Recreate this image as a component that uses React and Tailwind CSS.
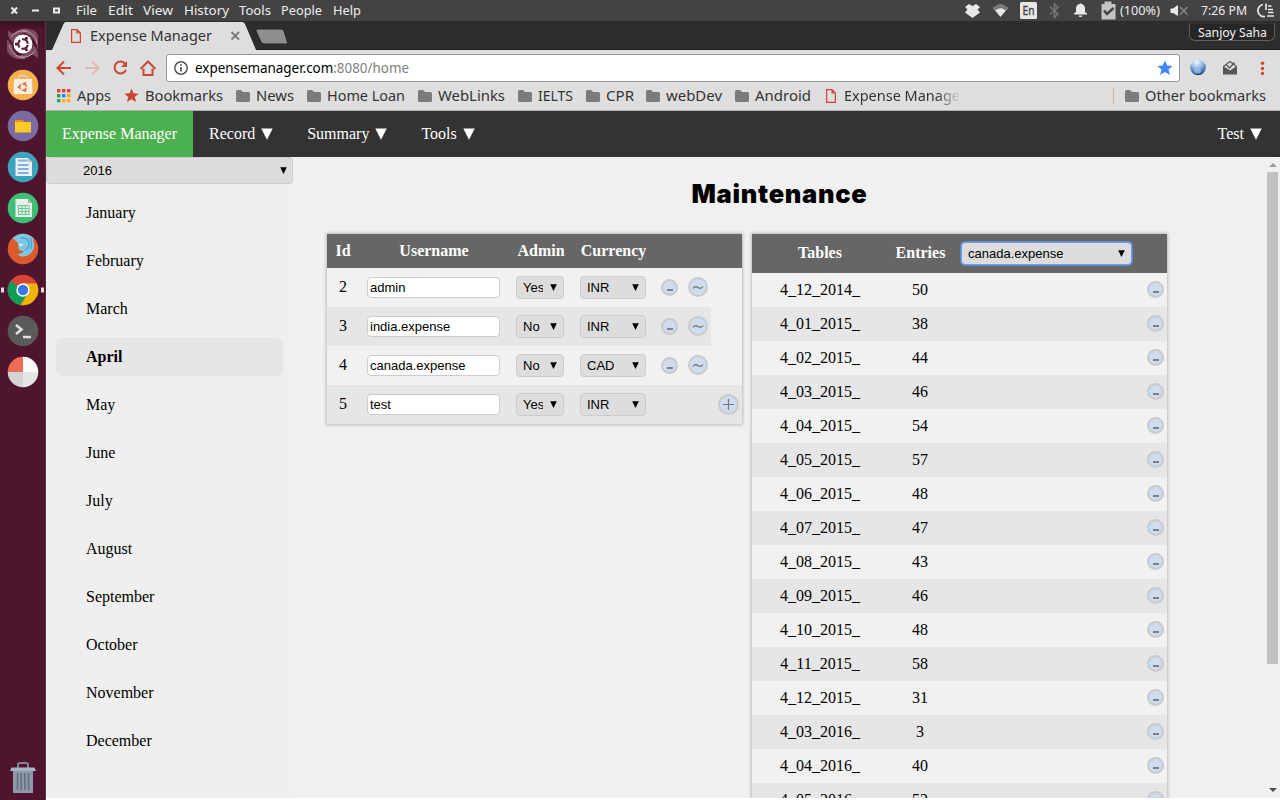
import React from "react";

const UI = "font-['Noto_Sans',sans-serif]";

function Label({ w, className = "", children }) {
  return (
    <svg width={w} height="20" className={`shrink-0 overflow-visible ${className}`}>
      <text x="0" y="15" textLength={w} lengthAdjust="spacingAndGlyphs">{children}</text>
    </svg>
  );
}

const Folder = () => (
  <svg width="14" height="12" viewBox="0 0 14 12" className="shrink-0"><path d="M0 1.5Q0 0 1.5 0H5L7 2H12.5Q14 2 14 3.5V10.5Q14 12 12.5 12H1.5Q0 12 0 10.5Z" fill="#7b7b7b" /></svg>
);
const Page = () => (
  <svg width="10" height="14" viewBox="0 0 10 14" className="shrink-0"><path d="M.6.6H6L9.4 4V13.4H.6ZM6 .6V4H9.4" fill="none" stroke="#cf4030" strokeWidth="1.2" /></svg>
);
const Star = ({ c, s }) => (
  <svg width={s} height={s} viewBox="0 0 16 16" className="shrink-0"><path d="M8 .5 10.2 5.6 15.6 6 11.5 9.5 12.9 15 8 12 3.1 15 4.500 9.5.4 6 5.800 5.6Z" fill={c} /></svg>
);
const Apps = () => (
  <svg width="14" height="14" className="shrink-0">
    {["#f03a3a", "#f03a3a", "#f03a3a", "#2ca05a", "#1e88f0", "#f5ac17", "#2ca05a", "#f5ac17", "#f5ac17"].map((c, i) => (
      <rect key={i} x={(i % 3) * 5} y={Math.floor(i / 3) * 5} width="3.4" height="3.4" fill={c} />
    ))}
  </svg>
);

const menus = [["File", 21, 11], ["Edit", 25, 10], ["View", 30, 11], ["History", 45, 10], ["Tools", 32, 10], ["People", 41, 11], ["Help", 28, 0]];

function TopBar() {
  return (
    <div className={`flex h-[21px] shrink-0 items-center justify-between bg-[#434343] text-[13px] text-[#eeeeee] ${UI}`}>
      <div className="flex items-center">
        <svg width="76" height="21" fill="none" stroke="#eee" strokeWidth="2"><path d="M11.500 7.500 17 13.500M17 7.500 11.500 13.500M32 10.500H39" /><rect x="54" y="8.500" width="5" height="4" /></svg>
        {menus.map(([t, w, g]) => (
          <span key={t} className="flex"><Label w={w} className="-mt-px fill-[#eeeeee]">{t}</Label><i style={{ width: g }} /></span>
        ))}
      </div>
      <div className="flex items-center">
        <svg width="156" height="21" className="shrink-0" fill="#e8e8e8">
          <path d="M5 4 8.500 6 12 4 16 7 13.500 9.500 16 12.500 8.500 18 1 12.500 3.500 9.500 1 7Z" />
          <path d="M29 8Q36.500 2 44 8L36.500 17Z" />
          <path d="M29 8Q36.500 0 44 8L41.500 10.500Q36.500 6 31.500 10.500Z" fill="#777" />
          <rect x="56" y="2" width="17" height="17" rx="1.500" />
          <text x="58.500" y="15" fontSize="12" fill="#444" stroke="#444" strokeWidth=".3" textLength="12" lengthAdjust="spacingAndGlyphs">En</text>
          <path d="M86 6.500 94 14 90.500 17.500V4L94 7.500 86 14.500" fill="none" stroke="#777" strokeWidth="1.500" />
          <path d="M110 14.500V13.500L112 12V8Q112.500 4.500 115.500 4L116.500 3 117.500 4Q120.500 4.500 121 8V12L123 13.500V14.500ZM114.500 15.500H118.500Q118.500 17 116.500 17T114.500 15.500Z" />
          <path d="M137.500 4H140.500V1.500H147.500V4H151.500V19.500H137.500Z" fill="#c4c4c4" />
          <path d="M140 10.500 143 14 149.500 8" fill="none" stroke="#444" strokeWidth="2.500" />
        </svg>
        <Label w={40} className="-mt-px mr-px fill-[#eeeeee]">(100%)</Label>
        <svg width="40" height="21"><path d="M9.500 8.500H12L17 5V16L12 13H9.500Z" fill="#e8e8e8" /><path d="M19 7 26.500 14.500M26.500 7 19 14.500" stroke="#888" strokeWidth="1.500" /></svg>
        <Label w={46} className="-mt-px fill-[#eeeeee]">7:26 PM</Label>
        <svg width="33" height="21" fill="none" stroke="#e8e8e8" strokeWidth="1.700"><path d="M16 4.500A6 6 0 0 0 18 16.500M19 3.500V10M21 6H24.500M21 9.500H26M21 12.500H26.500M20 16H27" /></svg>
      </div>
    </div>
  );
}

const Gnome = ({ c, s = 1 }) => (
  <g transform={`translate(23 21) scale(${s})`} fill="none" stroke={c} strokeWidth="2.2">
    <circle r="5" strokeDasharray="8.4 2.07" strokeDashoffset="-1" />
    <g fill={c} stroke="none"><circle cx="-7" r="1.600" /><circle cx="3.600" cy="-6" r="1.600" /><circle cx="3.600" cy="6" r="1.600" /></g>
  </g>
);

const launcher = [
  <>
    <g fill="#8b5c73" fillOpacity=".75">
      <path d="M8 7Q11 11 14 10Q21 3 31 8Q20 8 13 20Q7 15 8 7Z" />
      <path d="M20 6Q34 4 38 12V28Q36 14 26 11Z" />
      <path d="M38 36Q34 31 31 32Q22 39 12 33Q27 34 34 22Q39 28 38 36Z" />
      <path d="M7 16V28Q12 38 26 36Q14 34 12 22Z" />
    </g>
    <path d="M9 22Q12 34 25 35M37 21Q36 9 22 7.500M11 14Q16 7 26 8M35 28Q30 35 20 34" stroke="#b9a0ad" strokeWidth="1" fill="none" />
    <circle cx="23" cy="21" r="9.500" fill="#fff" /><Gnome c="#54152f" s={0.95} />
  </>,
  <><circle cx="23" cy="21" r="15.300" fill="#f6b04c" /><path d="M18.500 15Q18 11.500 23 11.500T27.500 15" fill="none" stroke="#d9d0bd" strokeWidth="1.500" /><path d="M14 15H32L32.500 30H13.500Z" fill="#f6eee3" /><g transform="translate(0 2)"><Gnome c="#e4643a" s={0.65} /></g></>,
  <><circle cx="23" cy="21" r="15.300" fill="#7b6ba3" /><path d="M15 15H23L24 17H31V27H15Z" fill="#fb8c00" /><rect x="15" y="17" width="16" height="10.500" fill="#ffca28" /></>,
  <><circle cx="23" cy="21" r="15.300" fill="#3ba3bb" /><path d="M15.500 12H28L32 16V30H15.500Z" fill="#eee" /><path d="M28 12V16H32Z" fill="#bbb" /><path d="M18 14.500H27.500M18 19H28.500M18 23H28.500M18 27H28.500" stroke="#7fb0e6" strokeWidth="2" /></>,
  <><circle cx="23" cy="21" r="15.300" fill="#3fbf76" /><path d="M15.500 12H28L32 16V30H15.500Z" fill="#e9efe9" /><path d="M28 12V16H32Z" fill="#aaa" /><path d="M18.500 18.500H29V27.500H18.500ZM18.500 21.500H29M18.500 24.500H29M22 18.500V27.500M25.500 18.500V27.500" stroke="#6fc898" strokeWidth="1.100" fill="none" /></>,
  <><circle cx="23" cy="21" r="15.300" fill="#dc5b2a" /><path d="M12 10.500Q23 1 34 10.500L33 12Q36 20 31 25Q27 29 21 28.500L17 26Q22 26 24 23Q19 23.500 18 19L19 17L16 13Q14 10 12 10.500Z" fill="#7cc9e6" /><path d="M21 10Q28 9 29 16Q29 20 25 22.500M30 10Q33 15 30.500 21" stroke="#4aa6d0" strokeWidth="1.500" fill="none" /><path d="M19 16Q21 18 23 16.500" stroke="#f4f4f4" strokeWidth="1.500" fill="none" /></>,
  <><circle cx="23" cy="21" r="15.300" fill="#da4437" /><path d="M23 21 10.500 12A15.300 15.300 0 0 0 20.500 36.100L27 25Z" fill="#0f9d58" /><path d="M36.700 14.300A15.300 15.300 0 0 1 20.500 36.100L29 23 23 14.300Z" fill="#f0b400" /><path d="M23 14.300H36.700L33 11H20Z" fill="#da4437" /><circle cx="23" cy="21" r="6.700" fill="#fff" /><circle cx="23" cy="21" r="5.200" fill="#3b78e7" /><rect x="1" y="18.500" width="3" height="5" fill="#ddd" /><rect x="41" y="18.500" width="3" height="5" fill="#ddd" /></>,
  <><circle cx="23" cy="21" r="15.300" fill="#5a5a5a" /><path d="M16 15 21.500 19.500 16 24M23 27H31" stroke="#e0e0e0" strokeWidth="2.500" fill="none" /></>,
  <><path d="M23 21V5.700A15.300 15.300 0 0 0 7.700 21Z" fill="#ef6c57" /><path d="M23 21V5.700A15.300 15.300 0 0 1 38.300 21Z" fill="#fafafa" /><path d="M23 21H7.700A15.300 15.300 0 0 0 23 36.300Z" fill="#d4d4d4" /><path d="M23 21H38.300A15.300 15.300 0 0 1 23 36.300Z" fill="#e6e6e6" /></>,
];

function Launcher() {
  return (
    <div className="flex w-[46px] shrink-0 flex-col border-r border-[#5e3046] bg-[#4f152e] bg-linear-to-b from-[#35101f] from-0% to-[#4f152e] to-1% pt-0.5">
      {launcher.map((n, i) => <svg key={i} width="45" height="41" className="shrink-0 overflow-visible">{n}</svg>)}
      <svg width="45" height="41" className="mt-auto" fill="none">
        <path d="M18 9V5.500Q18 4 20 4H26Q28 4 28 5.500V9" stroke="#7c8798" strokeWidth="2" />
        <rect x="13" y="11" width="20" height="23" fill="#8e99aa" />
        <path d="M17.500 14V31M21.200 14V31M24.900 14V31M28.600 14V31" stroke="#667184" strokeWidth="1.700" />
        <path d="M10 12 11.500 8.500H34.500L36 12Z" fill="#a9b2c4" />
      </svg>
    </div>
  );
}

const bookmarks = [["News", 38, 13], ["Home Loan", 78, 13], ["WebLinks", 67, 13], ["IELTS", 35, 13], ["CPR", 28, 12], ["webDev", 56, 13], ["Android", 56, 14]];

function Browser() {
  return (
    <div className={`shrink-0 text-[15px] ${UI}`}>
      <div className="flex h-[29px] justify-between bg-[#2d2d2d] shadow-[inset_0_-1px_#202020]">
        <div className="grid">
          <svg width="260" height="29" className="col-start-1 row-start-1"><path d="M6 29 17.500 3Q18.500 1 20 1H196Q198 1 199 3L210 29Z" fill="#dedede" /><path d="M211 8H235Q237 8 238 10L242 23H218Q216 23 215 21L210 10Q209.500 8 211 8Z" fill="#8e8e8e" stroke="#222" /><path d="M185.500 11 193 18.500M193 11 185.500 18.500" stroke="#777" strokeWidth="1.800" /></svg>
          <div className="col-start-1 row-start-1 flex gap-[9px] pt-[5px] pl-[25px] [&>svg:first-child]:mt-[3px]"><Page /><Label w={122} className="fill-[#333333]">Expense Manager</Label></div>
        </div>
        <div className="mt-0.5 mr-[5px] flex h-[18px] w-[86px] justify-center rounded-b-md border border-[#606060] border-t-[#333333] bg-[#262626] text-[13px]"><Label w={69} className="-mt-0.5 fill-[#f2f2f2]">Sanjoy Saha</Label></div>
      </div>
      <div className="flex h-[36px] items-center bg-[#dedede]">
        <svg width="120" height="36" fill="none" stroke="#cb4634" strokeWidth="2">
          <path d="M25 18H12M18 11.500 11.500 18 18 24.500" />
          <path d="M39 18H52M46 11.500 52.500 18 46 24.500" stroke="#dfbbb6" />
          <path d="M79.500 14A6 6 0 1 0 80 20" /><path d="M81 11V17H75Z" fill="#cb4634" stroke="none" />
          <path d="M97.500 18.500V25H106.500V18.500M94.500 19 102 11.500 109.500 19" />
        </svg>
        <div className="flex h-7 w-[1014px] items-center rounded-[3px] border border-[#999] bg-white pl-[7px]">
          <svg width="14" height="14" viewBox="0 0 14 14" fill="none" stroke="#555" strokeWidth="1.500"><circle cx="7" cy="7" r="6.200" /><path d="M7 6V10.500M7 3.300V4.800" strokeWidth="1.800" /></svg>
          <div className="flex pl-[7px]"><Label w={214} className="fill-black">expensemanager.com<tspan fill="#808080">:8080/home</tspan></Label></div>
          <div className="mr-[6px] ml-auto"><Star c="#4285f4" s={16} /></div>
        </div>
        <svg width="100" height="36" className="overflow-visible">
          <defs><radialGradient id="globe" cx=".42" cy=".15" r=".9"><stop offset="0" stopColor="#f4f9ff" /><stop offset=".4" stopColor="#9fbfe6" /><stop offset=".7" stopColor="#4e7fbb" /><stop offset="1" stopColor="#17386b" /></radialGradient></defs>
          <circle cx="18" cy="17.500" r="7.800" fill="url(#globe)" />
          <ellipse cx="17.500" cy="21" rx="3.500" ry="2.500" fill="#a8cdf2" fillOpacity=".6" />
          <path d="M43 16 50 20.500 57 16V24.500H43Z" fill="#555" /><path d="M43.500 16.500 50 11.500 56.500 16.500M46.500 15 49.500 18 54.500 12.500" fill="none" stroke="#555" strokeWidth="1.300" />
          <g fill="#cb4634"><circle cx="82.500" cy="13.300" r="1.700" /><circle cx="82.500" cy="18.500" r="1.700" /><circle cx="82.500" cy="23.500" r="1.700" /></g>
        </svg>
      </div>
      <div className="flex h-[25px] items-center border-b border-[#b0b0b0] bg-[#dedede] pb-[5px] pl-[11px]">
        <Apps /><Label w={34} className="ml-[6px] fill-[#333333]">Apps</Label>
        <i className="w-[13px]" /><Star c="#cb4634" s={15} /><Label w={78} className="ml-[6px] fill-[#333333]">Bookmarks</Label><i className="w-[13px]" />
        {bookmarks.map(([t, w, g]) => (
          <span key={t} className="flex items-center"><Folder /><i className="w-[6px]" /><Label w={w} className="fill-[#333333]">{t}</Label><i style={{ width: g }} /></span>
        ))}
        <i className="w-px" /><Page />
        <div className="ml-2 mask-r-from-80%"><Label w={116} className="fill-[#333333]">Expense Manage</Label></div>
        <i className="mr-[11px] ml-auto h-4 w-px bg-[#d9aaa6]" /><Folder /><i className="w-[6px]" /><Label w={121} className="mr-[14px] fill-[#333333]">Other bookmarks</Label>
      </div>
    </div>
  );
}

const Tri = ({ className = "", s = 12 }) => (
  <svg width={s} height={s} viewBox="0 0 12 12" className={`shrink-0 ${className}`}><path d="M.3.500H11.700L6 11.800Z" fill="currentColor" /></svg>
);

function Nav() {
  return (
    <nav className="flex h-[46px] shrink-0 items-center bg-[#333333] text-white">
      <div className="flex h-full w-[147px] items-center justify-center bg-[#4caf50]">Expense Manager</div>
      {["Record", "Summary", "Tools"].map((t) => <div key={t} className="flex items-center pr-[18px] pl-4"><span className="mr-[6px]">{t}</span><Tri /></div>)}
      <div className="mr-[18px] ml-auto flex items-center"><span className="mr-[6px]">Test</span><Tri /></div>
    </nav>
  );
}

function Select({ className, pad = "pl-[6px] pr-[6px]", children }) {
  return (
    <div className={`flex shrink-0 items-center justify-between overflow-hidden rounded-[4px] border bg-[#dddddd] font-['Liberation_Sans',sans-serif] text-[13px] font-normal text-black ${pad} ${className}`}>
      <span className="overflow-hidden">{children}</span><Tri s={7} className="mb-px" />
    </div>
  );
}

function Round({ className, children }) {
  return <div className={`flex shrink-0 items-center justify-center rounded-full border-2 border-[#cacaca] bg-[#cddcee] ${className}`}>{children}</div>;
}
const Minus = ({ className = "" }) => <Round className={`size-[17px] ${className}`}><svg width="13" height="13" className="shrink-0"><path d="M4 9H10" stroke="#777" strokeWidth="1.800" /></svg></Round>;

const months = ["January", "February", "March", "April", "May", "June", "July", "August", "September", "October", "November", "December"];
const users = [[2, "admin", "Yes", "INR"], [3, "india.expense", "No", "INR"], [4, "canada.expense", "No", "CAD"], [5, "test", "Yes", "INR"]];
const tables = [["12_2014", 50], ["01_2015", 38], ["02_2015", 44], ["03_2015", 46], ["04_2015", 54], ["05_2015", 57], ["06_2015", 48], ["07_2015", 47], ["08_2015", 43], ["09_2015", 46], ["10_2015", 48], ["11_2015", 58], ["12_2015", 31], ["03_2016", 3], ["04_2016", 40], ["05_2016", 52]];

function Users() {
  return (
    <div className="w-[415px] self-start shadow-[0_0_3px_1px_#bbbbbb]">
      <div className="flex h-[34px] items-center bg-[#666666] text-center font-bold text-white">
        <span className="w-8">Id</span><span className="w-[150px]">Username</span><span className="w-16">Admin</span><span className="w-[81px]">Currency</span>
      </div>
      {users.map(([id, n, a, c], i) => (
        <div key={id} className={`flex h-[39px] items-center ${i % 2 ? "bg-[#e6e6e6]" : "bg-[#f1f1f1]"} ${i === 1 ? "w-[384px]" : ""}`}>
          <span className="mb-px w-8 text-center">{id}</span>
          <div className="ml-2 flex h-[21px] w-[133px] items-center rounded-[4px] border border-[#cccccc] bg-white pl-[2px] font-['Liberation_Sans',sans-serif] text-[13px]">{n}</div>
          <Select className="ml-4 h-[23px] w-12 border-[#cccccc] [&>span]:w-5">{a}</Select>
          <Select className="ml-4 h-[23px] w-[66px] border-[#cccccc]">{c}</Select>
          {i < 3 ? (
            <div className="ml-[15px] flex items-center gap-[10px]"><Minus /><Round className="mb-px size-5"><svg width="16" height="16" className="shrink-0"><path d="M3 9.500Q5 6.500 8 8.500T13 7.500" fill="none" stroke="#777" strokeWidth="1.300" /></svg></Round></div>
          ) : <Round className="mr-[3px] ml-auto size-[21px]"><svg width="17" height="17" className="shrink-0"><path d="M8.500 3V14M3 8.500H14" stroke="#777" strokeWidth="1.200" /></svg></Round>}
        </div>
      ))}
    </div>
  );
}

function Tables() {
  return (
    <div className="w-[415px] self-start shadow-[0_0_3px_1px_#bbbbbb]">
      <div className="flex h-[39px] items-center bg-[#666666] text-center font-bold text-white">
        <span className="mb-px w-[136px]">Tables</span><span className="mb-px w-[65px]">Entries</span>
        <Select className="ml-2 h-[23px] w-[171px] border-[#6f9be0] shadow-[0_0_0_1px_#5a87cf]">canada.expense</Select>
      </div>
      {tables.map(([t, e], i) => (
        <div key={t} className={`flex h-[34px] items-center text-center ${i % 2 ? "bg-[#e6e6e6]" : "bg-[#f1f1f1]"}`}>
          <span className="w-[136px]">4_{t}_</span><span className="w-16">{e}</span><Minus className="mr-[3px] mb-px ml-auto" />
        </div>
      ))}
    </div>
  );
}

export default function App() {
  return (
    <div className="flex h-[800px] w-[1280px] flex-col overflow-hidden bg-white font-['Liberation_Serif',serif] text-base text-black">
      <TopBar />
      <div className="flex min-h-0 flex-1">
        <Launcher />
        <div className="flex min-w-0 flex-1 flex-col">
          <Browser />
          <Nav />
          <div className="mb-0.5 flex min-h-0 flex-1 overflow-hidden bg-[#f0f0f0]">
            <aside className="w-[247px] shrink-0 bg-[#efefef]">
              <Select pad="pl-9 pr-[5px]" className="h-[27px] w-full border-[#cccccc]">2016</Select>
              <div className="flex flex-col gap-[10px] p-[10px]">
                {months.map((m) => <div key={m} className={`flex h-[38px] items-center rounded-[5px] pl-[30px] ${m === "April" ? "bg-[#e6e6e6] font-bold" : ""}`}>{m}</div>)}
              </div>
            </aside>
            <main className="flex flex-1 flex-col pl-[34px]">
              <h1 className="mt-[17px] mb-5 h-10 w-[905px] text-center font-['Inter',sans-serif] text-[25.5px] leading-10 font-black tracking-[0.7px]">Maintenance</h1>
              <div className="flex gap-[10px]"><Users /><Tables /></div>
            </main>
            <div className="flex w-[14px] shrink-0 flex-col items-center bg-[#f1f1f1] pt-[5px] pr-px">
              <svg width="8" height="5"><path d="M0 5 4 1 8 5Z" fill="#999" /></svg>
              <div className="mt-[5px] h-[492px] w-[11px] bg-[#c1c1c1]" />
              <svg width="8" height="5" className="mt-auto mb-[5px]"><path d="M0 0H8L4 4Z" fill="#505050" /></svg>
            </div>
          </div>
        </div>
      </div>
    </div>
  );
}
